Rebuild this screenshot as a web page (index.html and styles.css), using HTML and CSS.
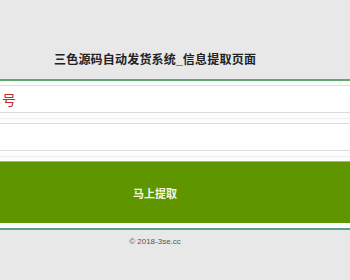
FILE: index.html
```html
<!DOCTYPE html>
<html lang="zh-CN">
<head>
    <meta charset="UTF-8">
    <meta name="viewport" content="width=device-width, initial-scale=1.0">
    <title>三色源码自动发货系统_信息提取页面</title>
    <link rel="stylesheet" href="styles.css">
</head>
<body>

    <!-- 标题 -->
    <div class="header">
        <h1 class="title">三色源码自动发货系统_信息提取页面</h1>
    </div>

    <!-- 表单 -->
    <div class="main">
        <div class="field">
            <span class="label">号</span>
        </div>
        <div class="spacer"></div>
        <div class="field"></div>
        <div class="spacer"></div>
        <button class="submit">马上提取</button>
    </div>

    <!-- 页脚 -->
    <div class="footer">
        <p>&copy; 2018-3se.cc</p>
    </div>

</body>
</html>
```

FILE: styles.css
```css
body {
    margin: 0;
    font-family: "Liberation Sans", "Noto Sans CJK SC", sans-serif;
    background-color: #e8e8e8;
    color: #333;
}

.header {
    height: 79px;
    box-sizing: border-box;
    padding: 52px 0 0 54px;
}

.header .title {
    margin: 0;
    font-size: 12px;
    font-weight: bold;
    color: #222;
    line-height: 16px;
    letter-spacing: 0.2px;
}

.main {
    background: #fdfdfd;
    border-top: 2px solid #5ea872;
    padding-top: 4px;
    padding-bottom: 5px;
    border-bottom: 2px solid #5e9e8c;
}

.field {
    height: 26px;
    border-top: 1px solid #dcdcdc;
    border-bottom: 1px solid #dcdcdc;
    background: #fff;
    display: flex;
    align-items: center;
}

.field .label {
    padding-left: 2px;
    font-size: 14px;
    color: #c22a30;
}

.spacer {
    height: 5px;
    border-bottom: 1px solid #eeeeee;
    margin-bottom: 4px;
}

.submit {
    display: block;
    width: 100%;
    height: 62px;
    border: none;
    border-top: 1px solid #a3b873;
    background-color: #5f9600;
    color: #f4f8e8;
    font-family: "Noto Sans CJK SC", sans-serif;
    font-size: 11px;
    font-weight: bold;
    padding: 0 40px 0 0;
    cursor: pointer;
}

.footer p {
    margin: 0;
    padding: 7px 40px 0 0;
    text-align: center;
    font-size: 8px;
    color: #555;
}
```
